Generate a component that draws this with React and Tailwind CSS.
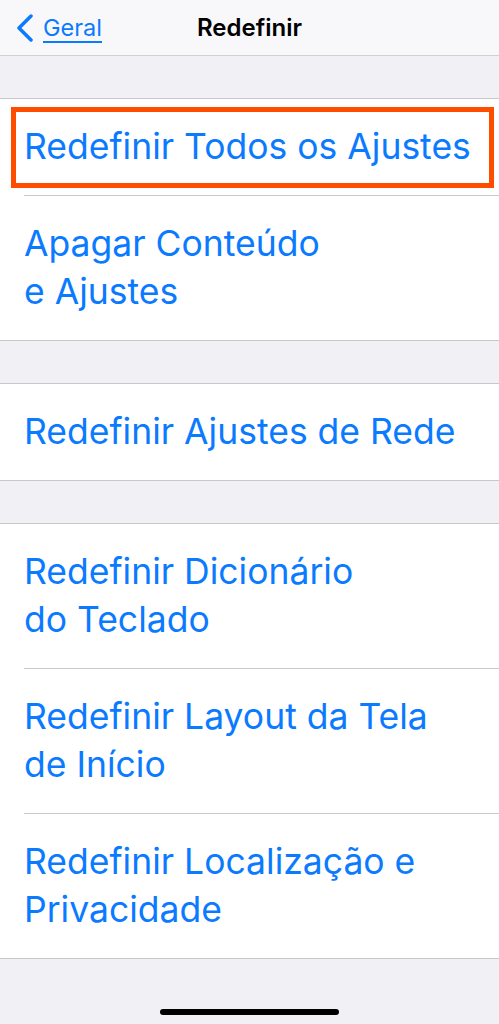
import React from "react";

const font = { fontFamily: "Inter, 'Noto Sans', sans-serif" };

const Row = ({ lines, last }) => (
  <div className="pl-6 bg-white">
    <div
      className={`py-6 pr-4 text-[35.5px] leading-[48px] text-[#0a7aff] ${
        last ? "" : "border-b border-[#c8c7cc]"
      }`}
    >
      {lines.map((l, i) => (
        <div key={i}>{l}</div>
      ))}
    </div>
  </div>
);

const Group = ({ children }) => (
  <div className="border-y border-[#c8c7cc] bg-white">{children}</div>
);

export default function App() {
  return (
    <div className="w-[499px] h-[1024px] bg-[#f0f0f5] flex flex-col" style={font}>
      {/* nav bar */}
      <div className="h-[56px] bg-[#f8f8fa] border-b border-[#d0d0d4] flex items-center relative">
        <div className="flex items-center pl-4 gap-[9px]">
          <svg width="18" height="28" viewBox="0 0 18 28">
            <path
              d="M15 2 L3 14 L15 26"
              fill="none"
              stroke="#0a7aff"
              strokeWidth="3.5"
              strokeLinecap="round"
              strokeLinejoin="round"
            />
          </svg>
          <span className="text-[23.5px] text-[#0a7aff] underline underline-offset-[5px] decoration-2">
            Geral
          </span>
        </div>
        <div className="absolute inset-0 flex items-center justify-center pointer-events-none">
          <span className="text-[24px] font-semibold text-black">Redefinir</span>
        </div>
      </div>

      <div className="h-[42px]" />

      <Group>
        <div className="relative">
          <Row lines={["Redefinir Todos os Ajustes"]} />
          <div className="absolute left-[11px] right-[5px] top-[8px] bottom-[8px] border-[5px] border-[#ff4d00]" />
        </div>
        <Row lines={["Apagar Conteúdo", "e Ajustes"]} last />
      </Group>

      <div className="h-[42px]" />

      <Group>
        <Row lines={["Redefinir Ajustes de Rede"]} last />
      </Group>

      <div className="h-[42px]" />

      <Group>
        <Row lines={["Redefinir Dicionário", "do Teclado"]} />
        <Row lines={["Redefinir Layout da Tela", "de Início"]} />
        <Row lines={["Redefinir Localização e", "Privacidade"]} last />
      </Group>

      <div className="flex-1 flex items-end justify-center pb-[9px]">
        <div className="w-[179px] h-[6px] rounded-full bg-black" />
      </div>
    </div>
  );
}
